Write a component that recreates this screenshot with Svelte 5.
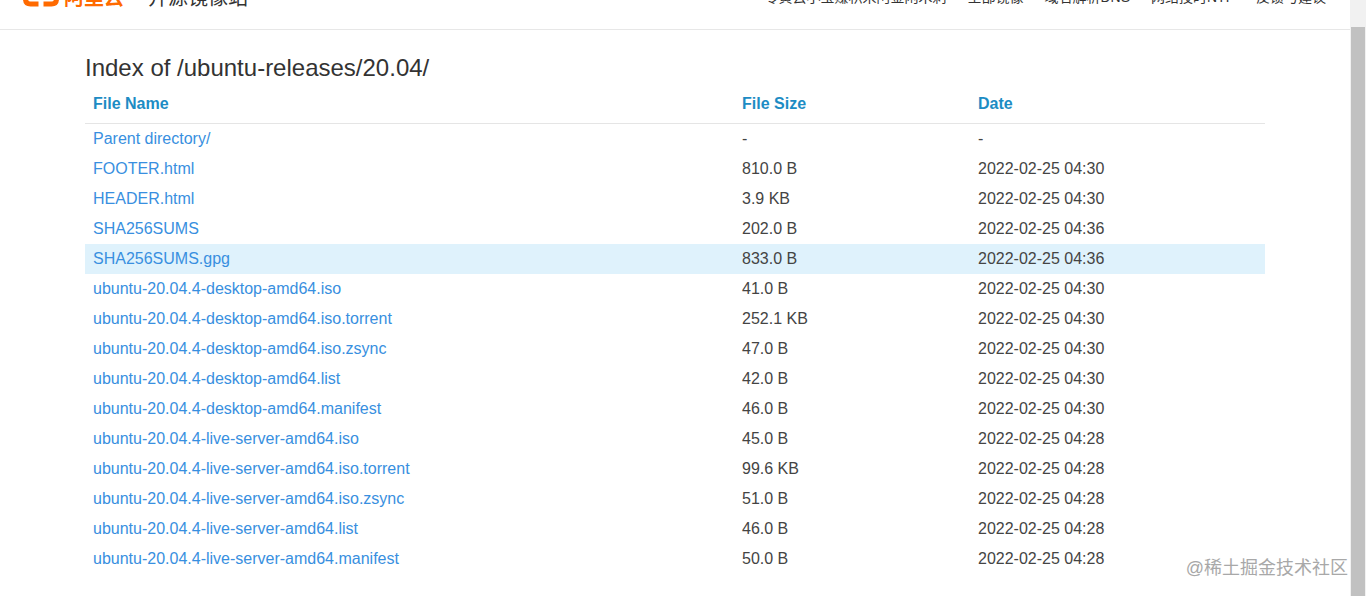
<script>
  const head = ['File Name', 'File Size', 'Date'];
  const rows = [
    ['Parent directory/', '-', '-'],
    ['FOOTER.html', '810.0 B', '2022-02-25 04:30'],
    ['HEADER.html', '3.9 KB', '2022-02-25 04:30'],
    ['SHA256SUMS', '202.0 B', '2022-02-25 04:36'],
    ['SHA256SUMS.gpg', '833.0 B', '2022-02-25 04:36'],
    ['ubuntu-20.04.4-desktop-amd64.iso', '41.0 B', '2022-02-25 04:30'],
    ['ubuntu-20.04.4-desktop-amd64.iso.torrent', '252.1 KB', '2022-02-25 04:30'],
    ['ubuntu-20.04.4-desktop-amd64.iso.zsync', '47.0 B', '2022-02-25 04:30'],
    ['ubuntu-20.04.4-desktop-amd64.list', '42.0 B', '2022-02-25 04:30'],
    ['ubuntu-20.04.4-desktop-amd64.manifest', '46.0 B', '2022-02-25 04:30'],
    ['ubuntu-20.04.4-live-server-amd64.iso', '45.0 B', '2022-02-25 04:28'],
    ['ubuntu-20.04.4-live-server-amd64.iso.torrent', '99.6 KB', '2022-02-25 04:28'],
    ['ubuntu-20.04.4-live-server-amd64.iso.zsync', '51.0 B', '2022-02-25 04:28'],
    ['ubuntu-20.04.4-live-server-amd64.list', '46.0 B', '2022-02-25 04:28'],
    ['ubuntu-20.04.4-live-server-amd64.manifest', '50.0 B', '2022-02-25 04:28']
  ];
  const nav = ['零黄云小宝赚积米阿金闲木刺', '全部镜像', '域名解析DNS', '网络授时NTP', '反馈与建议'];
</script>

<div class="page">
  <main class="content">
    <header class="top">
      <div class="bar">
        <div class="brand">
          <svg class="logo" width="36" height="20" viewBox="0 0 36 20" aria-hidden="true">
            <path d="M2.500 0v12q0 5 5 5h8M33.500 0v12q0 5-5 5h-8" fill="none" stroke="#ff6a00" stroke-width="5" />
          </svg>
          <span class="ali">阿里云</span>
          <span class="site">开源镜像站</span>
        </div>
        <nav class="nav">
          {#each nav as item}<span>{item}</span>{/each}
        </nav>
      </div>
    </header>
    <section class="listing">
      <h1>Index of /ubuntu-releases/20.04/</h1>
      <div class="table">
        <div class="row head">
          {#each head as h}<div class="cell">{h}</div>{/each}
        </div>
        {#each rows as r, i}
          <div class="row" class:hot={i === 4}>
            <div class="cell"><a href="#top">{r[0]}</a></div>
            <div class="cell">{r[1]}</div>
            <div class="cell">{r[2]}</div>
          </div>
        {/each}
      </div>
    </section>
  </main>
  <aside class="scroll"><div class="thumb"></div></aside>
  <div class="mark">@稀土掘金技术社区</div>
</div>

<style>
  :global(body) {
    margin: 0;
    background: #fff;
    overflow: hidden;
  }
  .page {
    display: flex;
    height: 596px;
    position: relative;
    overflow: hidden;
    font-family: "Liberation Sans", "Noto Sans CJK SC", sans-serif;
    font-size: 16px;
    color: #444;
  }
  .content {
    flex: 1;
    min-width: 0;
  }
  .top {
    height: 29px;
    border-bottom: 1px solid #e7e7e7;
    overflow: hidden;
  }
  .bar {
    display: flex;
    justify-content: space-between;
    margin-top: -13px;
    height: 20px;
    padding: 0 24px 0 23px;
  }
  .brand {
    display: flex;
    height: 20px;
    line-height: 22px;
    font-size: 20px;
    white-space: nowrap;
  }
  .logo {
    flex: none;
  }
  .ali {
    margin-left: 5px;
    font-weight: 700;
    color: #ff6a00;
    width: 60px;
  }
  .site {
    margin-left: 24px;
    color: #333;
  }
  .nav {
    display: flex;
    gap: 21px;
    font-size: 14px;
    line-height: 20px;
    height: 20px;
    margin-top: 0;
    color: #333;
    white-space: nowrap;
  }
  .listing {
    width: 1180px;
    margin-left: 85px;
  }
  h1 {
    margin: 0;
    padding-top: 22px;
    font-size: 24px;
    line-height: 32px;
    font-weight: 400;
    color: #333;
  }
  .table {
    margin-top: 1px;
  }
  .row {
    display: grid;
    grid-template-columns: 649px 236px 1fr;
    height: 30px;
    line-height: 30px;
  }
  .head {
    height: 38px;
    line-height: 38px;
    border-bottom: 1px solid #e5e5e5;
    font-weight: 700;
    color: #1d8cc4;
  }
  .cell {
    padding-left: 8px;
    white-space: nowrap;
  }
  .hot {
    background: #dff2fc;
  }
  a {
    color: #388fe0;
    text-decoration: none;
  }
  .scroll {
    width: 16px;
    flex: none;
    background: #f1f1f1;
  }
  .thumb {
    margin: 27px 1px 0;
    height: 569px;
    background: #c1c1c1;
  }
  .mark {
    position: absolute;
    right: 18px;
    bottom: 17px;
    font-size: 18px;
    color: #a8a8a8;
    white-space: nowrap;
  }
</style>
